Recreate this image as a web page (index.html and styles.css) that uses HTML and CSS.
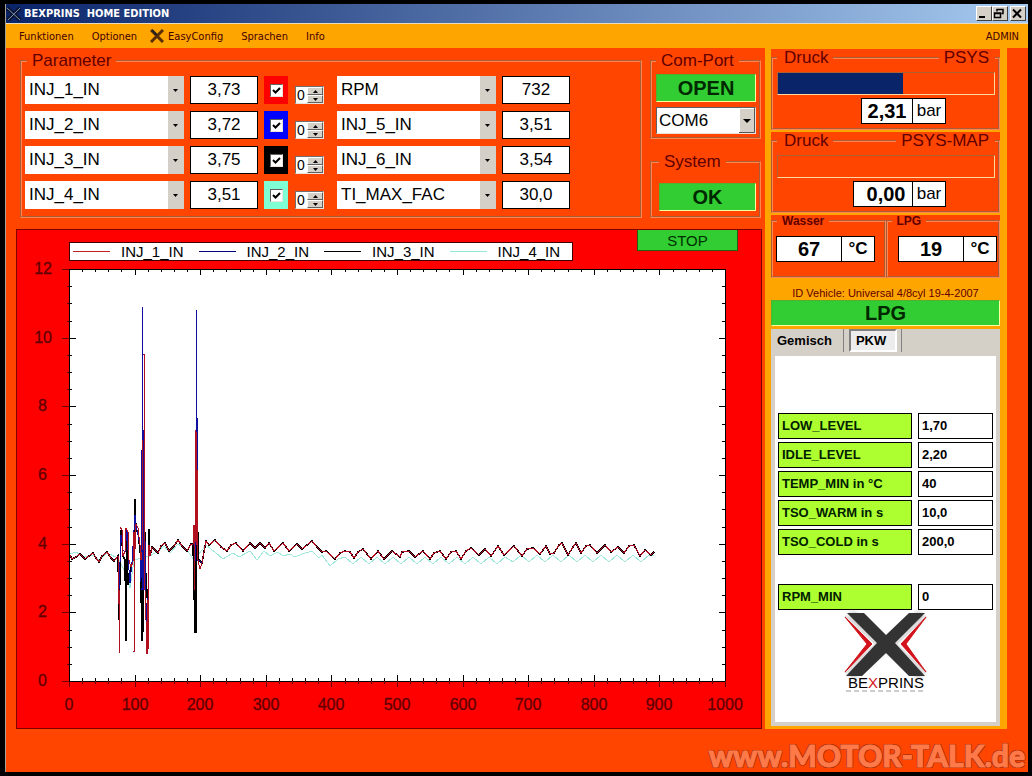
FILE: index.html
```
<!DOCTYPE html>
<html lang="de">
  <head>
    <meta charset="utf-8">
    <title>BEXPRINS HOME EDITION</title>
    <link rel="stylesheet" href="styles.css">
  </head>
  <body>
    <div class="window">
      <header class="titlebar">
        <svg class="app-icon" viewBox="0 0 16 16"><path d="M1 2l13 12M14 2L2 14" stroke="#0b1530" stroke-width="4"/><path d="M1 2l13 12M14 2L2 14" stroke="#7f93b8" stroke-width="1"/></svg>
        <h1>BEXPRINS&nbsp; HOME EDITION</h1>
        <div class="winbuttons">
          <button title="Minimieren"><svg viewBox="0 0 12 11"><path d="M2 9h6" stroke="#000" stroke-width="2"/></svg></button>
          <button title="Wiederherstellen"><svg viewBox="0 0 12 11"><path d="M4 3.500V1.500h6v4H8.500M4 1.500h6M1.500 5h6v4.500h-6zM1.500 5.500h6" fill="none" stroke="#000" stroke-width="1.500"/></svg></button>
          <button class="close" title="Schließen"><svg viewBox="0 0 12 11"><path d="M2 1.500l8 8M10 1.500l-8 8" stroke="#000" stroke-width="2"/></svg></button>
        </div>
      </header>

      <nav class="menu">
        <a href="#">Funktionen</a>
        <a href="#">Optionen</a>
        <a href="#" class="easy"><svg viewBox="0 0 14 14"><path d="M1 1l12 12M13 1L1 13" stroke="#5a2d00" stroke-width="3"/><path d="M2 1l5 5" stroke="#222" stroke-width="2"/></svg>EasyConfig</a>
        <a href="#">Sprachen</a>
        <a href="#">Info</a>
        <span class="user">ADMIN</span>
      </nav>

      <main>
        <div class="left">
          <div class="top">
            <fieldset class="group params">
              <legend>Parameter</legend>
              <div class="row">
                <select class="param" aria-label="Parameter 1"><option>INJ_1_IN</option></select>
                <input class="value" aria-label="Wert 1" value="3,73" readonly>
                <label class="mark red"><input type="checkbox" aria-label="Kurve 1" checked></label>
                <div class="spin"><input aria-label="Offset 1" value="0"><button title="+"></button><button class="down" title="-"></button></div>
                <select class="param" aria-label="Parameter 5"><option>RPM</option></select>
                <input class="value" aria-label="Wert 5" value="732" readonly>
              </div>
              <div class="row">
                <select class="param" aria-label="Parameter 2"><option>INJ_2_IN</option></select>
                <input class="value" aria-label="Wert 2" value="3,72" readonly>
                <label class="mark blue"><input type="checkbox" aria-label="Kurve 2" checked></label>
                <div class="spin"><input aria-label="Offset 2" value="0"><button title="+"></button><button class="down" title="-"></button></div>
                <select class="param" aria-label="Parameter 6"><option>INJ_5_IN</option></select>
                <input class="value" aria-label="Wert 6" value="3,51" readonly>
              </div>
              <div class="row">
                <select class="param" aria-label="Parameter 3"><option>INJ_3_IN</option></select>
                <input class="value" aria-label="Wert 3" value="3,75" readonly>
                <label class="mark black"><input type="checkbox" aria-label="Kurve 3" checked></label>
                <div class="spin"><input aria-label="Offset 3" value="0"><button title="+"></button><button class="down" title="-"></button></div>
                <select class="param" aria-label="Parameter 7"><option>INJ_6_IN</option></select>
                <input class="value" aria-label="Wert 7" value="3,54" readonly>
              </div>
              <div class="row">
                <select class="param" aria-label="Parameter 4"><option>INJ_4_IN</option></select>
                <input class="value" aria-label="Wert 4" value="3,51" readonly>
                <label class="mark aqua"><input type="checkbox" aria-label="Kurve 4" checked></label>
                <div class="spin"><input aria-label="Offset 4" value="0"><button title="+"></button><button class="down" title="-"></button></div>
                <select class="param" aria-label="Parameter 8"><option>TI_MAX_FAC</option></select>
                <input class="value" aria-label="Wert 8" value="30,0" readonly>
              </div>
            </fieldset>

            <div class="side">
              <fieldset class="group com">
                <legend>Com-Port</legend>
                <button class="green">OPEN</button>
                <select aria-label="Com-Port"><option>COM6</option></select>
              </fieldset>
              <fieldset class="group system">
                <legend>System</legend>
                <button class="green">OK</button>
              </fieldset>
            </div>
          </div>

          <section class="chart">
            <div class="chart-head">
              <ul class="legend">
                <li class="s1">INJ_1_IN</li>
                <li class="s2">INJ_2_IN</li>
                <li class="s3">INJ_3_IN</li>
                <li class="s4">INJ_4_IN</li>
              </ul>
              <button class="stop">STOP</button>
            </div>
            <svg id="plot" viewBox="17 262 744 466"></svg>
          </section>
        </div>

        <aside class="right">
          <fieldset class="group gauge">
            <legend><span>Druck</span><i></i><span>PSYS</span></legend>
            <progress value="58" max="100" aria-label="PSYS"></progress>
            <div class="reading"><output>2,31</output><span>bar</span></div>
          </fieldset>
          <fieldset class="group gauge">
            <legend><span>Druck</span><i></i><span>PSYS-MAP</span></legend>
            <progress value="0" max="100" aria-label="PSYS-MAP"></progress>
            <div class="reading wide"><output>0,00</output><span>bar</span></div>
          </fieldset>
          <div class="temps">
            <fieldset class="group">
              <legend>Wasser</legend>
              <div class="reading"><output>67</output><span>°C</span></div>
            </fieldset>
            <fieldset class="group">
              <legend>LPG</legend>
              <div class="reading"><output>19</output><span>°C</span></div>
            </fieldset>
          </div>

          <p class="vehicle">ID Vehicle: Universal 4/8cyl 19-4-2007</p>
          <button class="green lpg">LPG</button>

          <div class="tabs">
            <div class="tabbar">
              <button>Gemisch</button>
              <button class="active">PKW</button>
            </div>
            <div class="sheet">
              <div class="field"><label for="low">LOW_LEVEL</label><input id="low" value="1,70"></div>
              <div class="field"><label for="idle">IDLE_LEVEL</label><input id="idle" value="2,20"></div>
              <div class="field"><label for="temp">TEMP_MIN in °C</label><input id="temp" value="40"></div>
              <div class="field"><label for="warm">TSO_WARM in s</label><input id="warm" value="10,0"></div>
              <div class="field"><label for="cold">TSO_COLD in s</label><input id="cold" value="200,0"></div>
              <div class="field apart"><label for="rpm">RPM_MIN</label><input id="rpm" value="0"></div>
              <svg class="logo" viewBox="0 0 84 82">
                <defs><filter id="soft"><feGaussianBlur stdDeviation="2"/></filter></defs>
                <path d="M6 4l72 62M78 4L6 66" stroke="#999" stroke-width="10" opacity=".5" filter="url(#soft)"/>
                <path d="M1 6l31 28L1 63M82 6L52 34l30 29" fill="none" stroke="#ddd" stroke-width="2"/>
                <path d="M1 7l27 27L1 62l22-28zM82 7L57 34l25 28-20-28z" fill="#d3141c" stroke="#d3141c"/>
                <path d="M3 3h17l22 22L65 3h16L51 33l30 33H65L42 43 18 66H2l31-33z" fill="#333"/>
                <text x="42" y="78" text-anchor="middle">BE<tspan fill="#d3141c">X</tspan>PRINS</text>
                <path d="M2 81h79" stroke="#ccc" stroke-width="2" stroke-dasharray="5 3"/>
              </svg>
            </div>
          </div>
        </aside>
      </main>

      <footer>www.MOTOR-TALK.de</footer>
    </div>

    <script>
    (function() {
        var plot = document.getElementById("plot");
        var L = 69, R = 725, T = 269, B = 681;

        function add(name, attrs, text) {
            var el = document.createElementNS("http://www.w3.org/2000/svg", name);
            for (var k in attrs) {
                el.setAttribute(k, attrs[k]);
            }
            if (text !== undefined) el.textContent = text;
            plot.appendChild(el);
        }
        function line(x1, y1, x2, y2, cls) {
            add("line", {x1: x1, y1: y1, x2: x2, y2: y2, "class": cls || "tick"});
        }

        add("rect", {x: L, y: T, width: R - L, height: B - T, "class": "area"});

        // x axis: minor tick every 20, label every 100
        for (var i = 0; i <= 50; i++) {
            var x = Math.round(L + i * (R - L) / 50), big = i % 5 == 0;
            line(x, B - (big ? 6 : 3), x, B);
            line(x, B, x, B + (big ? 6 : 3), "tick out");
            line(x, T, x, T + (big ? 6 : 3));
            if (big) add("text", {x: x, y: 710, "class": "lbl mid"}, i * 20);
        }
        // y axis: minor tick every 0.5, label every 2
        for (var j = 0; j <= 24; j++) {
            var y = Math.round(B - j * (B - T) / 24), main = j % 4 == 0;
            line(L, y, L + (main ? 7 : 3), y);
            line(L - (main ? 7 : 2), y, L, y, "tick out");
            line(R - (main ? 6 : 3), y, R, y);
            if (main) add("text", {x: j > 16 ? 52 : 47, y: y + 5, "class": "lbl end"}, j / 2);
        }

        var idle = "70,555 72,559 76,557 80,554 83,557 85,559 89,556 93,553 96,558 99,562 102,556 107,552 111,558 114,561 118,556 ";
        var mid = "150,556 152,547 158,553 161,546 165,543 169,551 174,546 178,540 182,546 187,551 191,544 193,544 ";
        var wave = "202,563 204,552 206,541 209,545 215,540 221,547 227,551 231,545 236,543 243,551 250,543 255,548 260,543 265,548 269,543 274,551 " +
            "283,543 289,551 297,544 302,549 307,545 312,541 317,547 322,552 326,551 335,559 340,553 345,551 350,552 354,558 358,552 363,549 371,559 " +
            "378,551 384,559 392,551 396,554 400,557 402,552 409,551 415,557 423,551 430,559 434,553 440,551 446,559 451,552 456,551 461,559 466,551 " +
            "471,548 479,555 485,549 491,556 498,546 504,555 514,546 522,556 527,549 533,548 540,554 546,546 550,554 554,553 559,545 562,543 568,555 " +
            "573,547 576,543 581,553 586,546 590,545 597,553 605,545 611,552 618,547 624,553 629,546 634,545 640,556 645,550 651,555 654,552";

        function series(cls, points) {
            add("polyline", {points: points, "class": "curve " + cls});
        }

        var aqua = "70,554 76,552 84,557 93,555 99,560 107,553 118,558 129,580 130,588 134,560 150,556 158,551 164,546 170,553 178,544 187,550 194,560 206,545 " +
            "216,553 223,559 233,553 239,557 250,551 257,560 264,551 270,556 278,552 283,556 290,554 295,557 302,554 312,551 319,558 322,555 330,566 338,559 ";
        for (var a = 345, n = 0; a < 652; a += 8, n++) {
            aqua += a + "," + ((n % 2 ? 564 : 557) - (a > 510 ? 2 : 0)) + " ";
        }
        series("s4", aqua + "654,556");
        series("s3", idle + "119,620 121,530 123,556 125,560 126,641 127,530 128,585 131,567 134,555 135,499 136,530 138,532 141,560 141,590 142,641 143,460 143,632 " +
            "144,440 145,560 148,610 149,529 150,556 " + mid + "194,588 195,633 195,540 196,633 197,440 198,560 199,560 " + wave);
        series("s2", idle + "119,590 121,535 123,550 125,552 127,530 129,570 130,583 132,562 135,515 136,525 140,545 141,582 142,450 142,307 142,590 143,427 144,590 " +
            "144,427 145,540 146,602 147,654 148,598 149,545 " + mid + "194,545 195,561 195,448 196,448 196,310 196,415 197,415 198,560 199,560 " + wave);
        series("s1", idle + "119,604 119,654 120,590 120,527 122,530 123,556 125,551 126,528 128,532 129,560 131,567 133,562 134,532 134,652 135,550 " +
            "136,524 138,528 140,545 141,560 142,553 143,440 143,354 144,354 144,560 146,620 147,654 147,600 148,652 149,545 " + mid +
            "194,525 194,590 195,545 196,430 197,545 197,470 198,560 200,569 " + wave);
    })();
    </script>
  </body>
</html>
```
FILE: styles.css
```
* {
  box-sizing: border-box;
}
body {
  margin: 0;
  padding: 4px 4px 4px 5px;
  background: #000;
  font-family: "Liberation Sans", Arial, sans-serif;
  color: #000;
}
button, input, select {
  font-family: inherit;
  margin: 0;
  border-radius: 0;
}
.window {
  display: flex;
  flex-direction: column;
  min-height: calc(100vh - 8px);
  border-left: 1px solid #a8a090;
  background: #ff4500;
}

/* title bar and menu */
.titlebar {
  display: flex;
  align-items: center;
  height: 20px;
  border-bottom: 1px solid #e8dcc0;
  background: linear-gradient(to right, #0a246a, #a6caf0);
}
.app-icon {
  width: 16px;
  height: 16px;
}
.titlebar h1 {
  flex: 1;
  margin: 0 0 0 2px;
  font: bold 11px "DejaVu Sans Condensed", "DejaVu Sans", sans-serif;
  color: #fff;
}
.winbuttons {
  display: flex;
  padding-right: 2px;
}
.winbuttons button {
  width: 16px;
  height: 15px;
  padding: 0;
  border: 1px solid;
  border-color: #fff #404040 #404040 #fff;
  background: #d4d0c8;
}
.winbuttons svg {
  display: block;
  width: 12px;
  height: 11px;
}
.winbuttons .close {
  margin-left: 2px;
}
.menu {
  display: flex;
  align-items: center;
  gap: 18px;
  height: 24px;
  padding: 0 9px 0 13px;
  background: #ffa500;
  font: 11px "DejaVu Sans Condensed", "DejaVu Sans", sans-serif;
}
.menu a {
  color: #400;
  text-decoration: none;
}
.menu .easy {
  display: flex;
  align-items: center;
  gap: 4px;
  margin-left: -5px;
}
.menu .easy svg {
  width: 14px;
  height: 14px;
}
.menu .user {
  margin-left: auto;
  color: #400;
}

main {
  display: flex;
  padding-right: 21px;
}
.left {
  flex: 1;
  min-width: 0;
  padding: 4px 3px 0 10px;
}
.top {
  display: flex;
  gap: 8px;
  padding: 0 1px 0 4px;
  margin-bottom: 11px;
}
.group {
  min-width: 0;
  margin: 0;
  border: 2px groove #ff8850;
}
.group legend {
  padding: 0 5px;
  font-size: 17px;
  line-height: 18px;
  color: #600000;
}

/* parameter rows */
.params {
  flex: 1;
  padding: 6px 3px 7px;
}
.params legend {
  margin-left: 2px;
}
.row {
  display: flex;
  gap: 6px;
  height: 28px;
}
.row + .row {
  margin-top: 7px;
}
.param {
  width: 159px;
  height: 28px;
  padding: 0 18px 2px 4px;
  border: 0;
  appearance: none;
  background: url("data:image/svg+xml,%3Csvg xmlns='http://www.w3.org/2000/svg' width='16' height='28'%3E%3Cpath fill='%23d4d0c8' d='M0 0h16v28H0z'/%3E%3Cpath d='M5 13h5l-2.5 3z'/%3E%3C/svg%3E") right / 16px 28px no-repeat #fff;
  font-size: 17px;
  color: #000;
}
.value {
  width: 68px;
  padding: 0;
  border: 1px solid #000;
  background: #fff;
  font-size: 17px;
  text-align: center;
}
.mark {
  display: flex;
  align-items: center;
  justify-content: center;
  width: 24px;
}
.mark input {
  appearance: none;
  width: 13px;
  height: 13px;
  margin: 0;
  border: 1px solid;
  border-color: #606060 #e8e4dc #e8e4dc #606060;
  background: #fff;
}
.mark input:checked {
  background: url("data:image/svg+xml,%3Csvg xmlns='http://www.w3.org/2000/svg' viewBox='0 0 11 11'%3E%3Cpath d='M2 5l2.500 2.500L9 3' fill='none' stroke='%23000' stroke-width='2'/%3E%3C/svg%3E") #fff;
}
.red { background: #f00; }
.blue { background: #00f; }
.black { background: #000; }
.aqua { background: #7fffd4; }

.spin {
  display: grid;
  grid-template: 8px 8px / 11px 16px;
  align-self: flex-end;
  margin: 0 7px 0 1px;
  border: 1px solid;
  border-color: #707070 #e8e4dc #e8e4dc #707070;
  background: #fff;
}
.spin input {
  grid-row: span 2;
  width: 11px;
  padding: 0 0 0 1px;
  border: 0;
  font-size: 14px;
}
.spin button {
  padding: 0;
  border: 1px solid;
  border-color: #fff #606060 #606060 #fff;
  background: url("data:image/svg+xml,%3Csvg xmlns='http://www.w3.org/2000/svg' width='5' height='3'%3E%3Cpath d='M0 3h5L2.500 0z'/%3E%3C/svg%3E") center no-repeat #d4d0c8;
}
.spin .down {
  background-image: url("data:image/svg+xml,%3Csvg xmlns='http://www.w3.org/2000/svg' width='5' height='3'%3E%3Cpath d='M0 0h5L2.500 3z'/%3E%3C/svg%3E");
}

/* com port and system */
.side {
  width: 111px;
}
.green {
  display: block;
  width: 100%;
  height: 28px;
  padding: 0;
  border: 1px solid;
  border-color: #50b030 #ffffa0 #ffffa0 #50b030;
  background: #32cd32;
  font-size: 20px;
  font-weight: bold;
  line-height: 24px;
  color: #002800;
}
.com {
  padding: 4px 3px 3px 4px;
}
.com select {
  width: 100%;
  height: 27px;
  margin-top: 5px;
  padding: 0 18px 0 2px;
  border: 1px solid;
  border-color: #606060 #e8e4dc #e8e4dc #606060;
  appearance: none;
  background: url("data:image/svg+xml,%3Csvg xmlns='http://www.w3.org/2000/svg' width='16' height='25'%3E%3Cpath fill='%23d4d0c8' d='M0 0h16v25H0z'/%3E%3Cpath fill='none' stroke='%23fff' d='M.5 24V.5H15'/%3E%3Cpath fill='none' stroke='%23555' d='M0 24.500h15.500V0'/%3E%3Cpath d='M4 11h8l-4 4z'/%3E%3C/svg%3E") right / 16px 25px no-repeat #fff;
  font-size: 17px;
  color: #000;
}
.system {
  margin-top: 14px;
  padding: 12px 3px 5px 7px;
}

/* chart */
.chart {
  border: 1px solid #800000;
  background: #f00;
}
.chart-head {
  display: flex;
  justify-content: space-between;
  align-items: flex-start;
  padding: 0 23px 0 52px;
  height: 32px;
}
.legend {
  display: flex;
  gap: 15px;
  margin: 12px 0 0;
  padding: 0 12px 0 3px;
  border: 1px solid #400000;
  background: #fff;
  list-style: none;
  font-size: 15px;
  line-height: 17px;
}
.legend li {
  display: flex;
  align-items: center;
  gap: 11px;
}
.legend li::before {
  content: "";
  width: 37px;
  border-top: 1px solid #000;
}
.legend .s1::before { border-color: #c02020; }
.legend .s2::before { border-color: #000080; }
.legend .s4::before { border-color: #90e8d8; }
.stop {
  width: 101px;
  height: 21px;
  padding: 0;
  border: 1px solid #206010;
  border-top: 0;
  background: #32cd32;
  font-size: 15px;
  color: #003000;
}
#plot {
  display: block;
  width: 100%;
  overflow: visible;
}
#plot .area {
  fill: #fff;
  stroke: #000;
  shape-rendering: crispEdges;
}
#plot .tick {
  stroke: #000;
  shape-rendering: crispEdges;
}
#plot .out { stroke: #700000; }
#plot .lbl {
  font-size: 16px;
  fill: #600000;
  stroke: #600000;
  stroke-width: .3;
}
#plot .mid { text-anchor: middle; }
#plot .end { text-anchor: end; }
#plot .curve {
  fill: none;
  shape-rendering: crispEdges;
}
#plot .s1 { stroke: #b01020; }
#plot .s2 { stroke: #1010a0; }
#plot .s3 { stroke: #000; stroke-width: 1.5; }
#plot .s4 { stroke: #a0e8dc; }

/* right column */
.right {
  display: flex;
  flex-direction: column;
  width: 242px;
  padding: 1px 7px 3px 6px;
  background: #ffa500;
}
.gauge {
  padding: 5px 3px 4px 4px;
  background: #ff4500;
  box-shadow: 0 -8px #ff4500;
  margin-bottom: 2px;
}
.gauge legend {
  display: flex;
  align-items: center;
  gap: 5px;
  width: 100%;
  padding: 0 6px 0 7px;
}
.gauge legend i {
  flex: 1;
  border-top: 2px groove #ff8850;
}
progress {
  display: block;
  width: 100%;
  height: 23px;
  border: 1px solid;
  border-color: #b06030 #ffd8a0 #ffd8a0 #b06030;
  appearance: none;
  background: transparent;
}
progress::-webkit-progress-bar {
  background: transparent;
}
progress::-webkit-progress-value {
  background: #0a246a;
}
.reading {
  display: flex;
  justify-content: flex-end;
  height: 26px;
  line-height: 24px;
}
.reading output, .reading span {
  border: 1px solid #000;
  background: #fff;
  font-size: 17px;
  text-align: center;
}
.reading output {
  width: 52px;
  font-size: 20px;
  font-weight: bold;
}
.reading span {
  width: 34px;
  margin-left: -1px;
}
.gauge .reading {
  margin: 3px 49px 0 0;
}
.gauge .wide output {
  width: 60px;
  padding-left: 6px;
}
.temps {
  display: grid;
  grid-template-columns: 1fr 1fr;
  background: #ff4500;
}
.temps .group {
  padding: 9px 1px 14px 3px;
}
.temps legend {
  margin-left: 1px;
  font-size: 12px;
  font-weight: bold;
  line-height: 12px;
}
.temps .reading {
  justify-content: flex-start;
}
.temps .group + .group .reading {
  justify-content: flex-end;
}
.temps .reading output {
  width: 66px;
}
.temps .reading span {
  font-weight: bold;
}
.vehicle {
  margin: 9px 0 0;
  font-size: 11px;
  line-height: 13px;
  text-align: center;
  color: #600000;
}
.lpg {
  height: 26px;
  line-height: 22px;
}

/* tabs */
.tabs {
  display: flex;
  flex-direction: column;
  flex: 1;
  margin-top: 3px;
  padding: 0 4px 4px;
  background: #d4d0c8;
}
.tabbar {
  display: flex;
  height: 27px;
}
.tabbar button {
  height: 23px;
  margin-right: 5px;
  padding: 0 11px 0 2px;
  border: 0;
  border-right: 1px solid #808080;
  background: none;
  font-size: 13px;
  font-weight: bold;
}
.tabbar .active {
  padding: 0 9px 0 5px;
  border: 2px solid;
  border-color: #808080 #fff #fff #808080;
  background: #ececec;
  box-shadow: 4px 0 #d4d0c8, 5px 0 #808080;
}
.sheet {
  flex: 1;
  padding: 57px 3px 24px;
  background: #fff;
}
.field {
  display: flex;
  gap: 6px;
  height: 26px;
  margin-bottom: 3px;
}
.field label, .field input {
  padding: 0 3px;
  border: 1px solid #000;
  font-size: 13px;
  font-weight: bold;
  line-height: 24px;
}
.field label {
  flex: 1;
  background: #adff2f;
  color: #002000;
}
.field input {
  width: 75px;
  background: #fff;
}
.apart {
  margin-top: 29px;
  margin-bottom: 0;
}
.logo {
  display: block;
  width: 84px;
  height: 82px;
  margin: 0 auto;
  overflow: visible;
}
.logo text {
  font: 15px "Liberation Sans", Arial, sans-serif;
}

footer {
  flex: 1;
  padding: 9px 3px 0 0;
  font: 900 30px/34px Lato, sans-serif;
  text-align: right;
  color: #ff7a48;
  -webkit-text-stroke: 1px #ff7a48;
  text-shadow: -1px -1px #a83010, 1px 1px #a83010, 1px -1px #a83010, -1px 1px #a83010;
}
```
